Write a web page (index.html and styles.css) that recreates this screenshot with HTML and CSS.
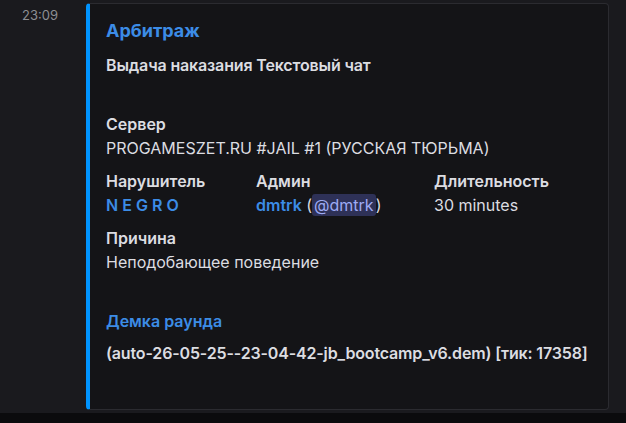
FILE: index.html
```html
<!DOCTYPE html>
<html lang="ru">
<head>
    <meta charset="UTF-8">
    <title>Арбитраж</title>
    <link rel="stylesheet" href="styles.css">
</head>
<body>
    <div class="message">
        <span class="time">23:09</span>
        <div class="embed">
            <div class="title">Арбитраж</div>
            <div class="desc">Выдача наказания Текстовый чат</div>

            <div class="field">
                <div class="name">Сервер</div>
                <div class="value">PROGAMESZET.RU #JAIL #1 (РУССКАЯ ТЮРЬМА)</div>
            </div>

            <div class="inline-row">
                <div class="field">
                    <div class="name">Нарушитель</div>
                    <div class="value link">N E G R O</div>
                </div>
                <div class="field">
                    <div class="name">Админ</div>
                    <div class="value"><span class="link">dmtrk</span> (<span class="mention">@dmtrk</span>)</div>
                </div>
                <div class="field">
                    <div class="name">Длительность</div>
                    <div class="value">30 minutes</div>
                </div>
            </div>

            <div class="field">
                <div class="name">Причина</div>
                <div class="value">Неподобающее поведение</div>
            </div>

            <div class="demo">
                <div class="name link">Демка раунда</div>
                <div class="value bold">(auto-26-05-25--23-04-42-jb_bootcamp_v6.dem) [тик: 17358]</div>
            </div>
        </div>
    </div>
    <div class="bottom"></div>
</body>
</html>
```

FILE: styles.css
```css
body {
    margin: 0;
    background-color: #1a1a1e;
    font-family: Inter, sans-serif;
    color: #dcdde1;
    height: 423px;
    overflow: hidden;
}

.message {
    display: flex;
    align-items: flex-start;
    padding-top: 3px;
    height: 410px;
}

.time {
    width: 86px;
    box-sizing: border-box;
    padding: 4px 0 0 22px;
    font-size: 13px;
    color: #8d8e93;
}

.embed {
    width: 523px;
    height: 407px;
    box-sizing: border-box;
    background-color: #141417;
    border: 1px solid #2b2b30;
    border-left: 4px solid #0094ff;
    border-radius: 4px;
    padding: 15px 16px 0 16px;
}

.title {
    font-size: 18px;
    font-weight: 700;
    color: #3c8ce6;
    line-height: 24px;
}

.desc {
    margin-top: 12px;
    font-size: 16px;
    font-weight: 600;
    letter-spacing: -0.15px;
    line-height: 20px;
    margin-bottom: 39px;
}

.name {
    font-size: 16px;
    font-weight: 600;
    line-height: 20px;
}

.value {
    font-size: 16px;
    line-height: 20px;
    margin-top: 4px;
}

.field {
    margin-bottom: 13px;
}

.inline-row {
    display: grid;
    grid-template-columns: 150px 178px auto;
}

.link {
    color: #3c8ce6;
    font-weight: 600;
}

.mention {
    background-color: #2e3157;
    color: #9eabf5;
    border-radius: 3px;
    padding: 1px 2px;
}

.demo {
    margin-top: 39px;
}

.demo .value {
    margin-top: 12px;
    white-space: nowrap;
}

.bold {
    font-weight: 600;
    letter-spacing: -0.15px;
}

.bottom {
    height: 13px;
    background-color: #0b0b0d;
}
```
